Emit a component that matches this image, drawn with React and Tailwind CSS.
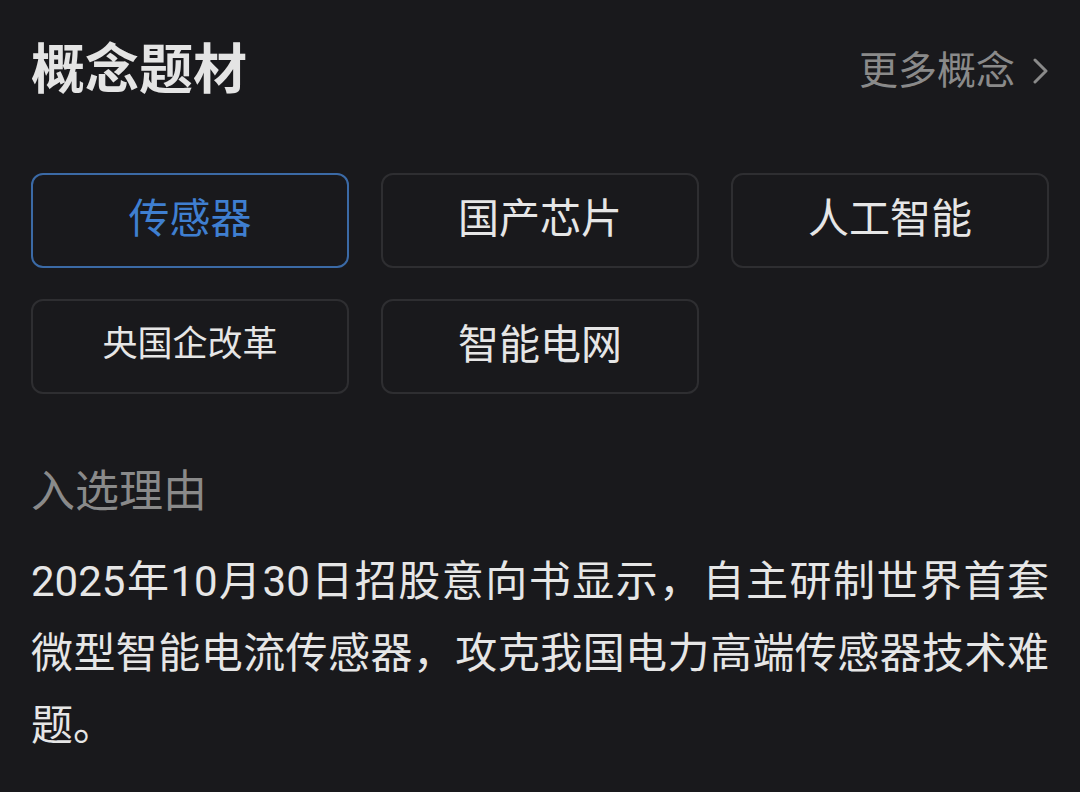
import React from 'react';

const concepts = [
  { name: '传感器', active: true },
  { name: '国产芯片' },
  { name: '人工智能' },
  { name: '央国企改革', small: true },
  { name: '智能电网' },
];

const App = () => {
  return (
    <div
      className="min-h-screen w-full bg-[#19191c] px-[31px]"
      style={{ fontFamily: 'Roboto, "Noto Sans CJK SC", "Noto Sans", sans-serif' }}
    >
      {/* Header */}
      <div className="flex h-[142px] items-center justify-between">
        <h1 className="text-[54px] font-bold leading-none text-[#e4e4e4]">概念题材</h1>
        <button className="flex items-center gap-[18px] text-[39px] leading-none text-[#8a8a8a]">
          <span>更多概念</span>
          <svg width="16" height="26" viewBox="0 0 16 26" fill="none">
            <path d="M2 2 L13 13 L2 24" stroke="#8a8a8a" strokeWidth="3" strokeLinecap="round" strokeLinejoin="round" />
          </svg>
        </button>
      </div>

      {/* Concept chips */}
      <div className="mt-[31px] grid grid-cols-3 gap-x-[32px] gap-y-[31px]">
        {concepts.map((c) => (
          <div
            key={c.name}
            className={`flex h-[95px] items-center justify-center rounded-[12px] border-2 pb-[2px] ${
              c.active ? 'border-[#3b6aa6] text-[#3f7fd0]' : 'border-[#2e2e31] text-[#e6e6e6]'
            } ${c.small ? 'text-[35px]' : 'text-[41px]'}`}
          >
            {c.name}
          </div>
        ))}
      </div>

      {/* Reason */}
      <div className="mt-[68px] text-[44px] leading-[60px] text-[#8a8a8a]">入选理由</div>
      <p className="mt-[24px] text-justify text-[42px] leading-[72px] text-[#e6e6e6]">
        2025年10月30日招股意向书显示，自主研制世界首套微型智能电流传感器，攻克我国电力高端传感器技术难题。
      </p>
    </div>
  );
};

export default App;
